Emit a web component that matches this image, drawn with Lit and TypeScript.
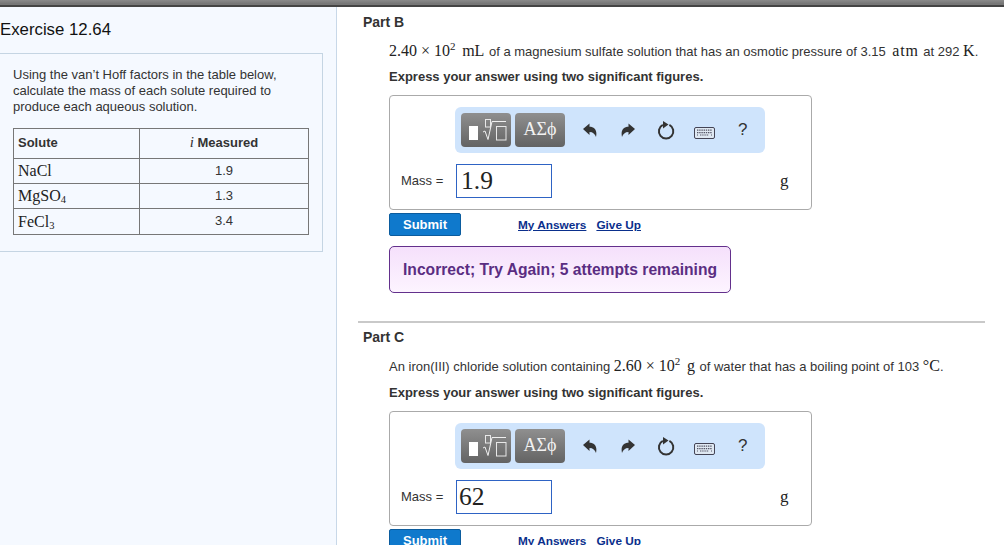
import { LitElement, html, css, svg } from "lit";
import { customElement } from "lit/decorators.js";

const rootIcon = html`<svg class="glyph" width="50" height="34" viewBox="0 0 50 34" aria-hidden="true">
  <rect x="8" y="13" width="9" height="14" fill="#fff"/>
  <rect x="24.5" y="6.5" width="5" height="7.5" fill="none" stroke="#e8e8e8" stroke-width="1"/>
  <path d="M22 19 L24 18 L27 26.5 L31 8.5 L45 8.5" fill="none" stroke="#f0f0f0" stroke-width="1"/>
  <rect x="35.5" y="13.5" width="9.5" height="13.5" fill="none" stroke="#e8e8e8" stroke-width="1"/>
</svg>`;

const arrow = svg`<path d="M0 6 L6.5 0.5 V3.7 C11.5 3.7 14.5 7 13 14 C12 11 10 9 6.5 9 V12 Z" fill="#333"/>`;

function toolbar() {
  return html`<div class="toolbar">
    <div class="tb">${rootIcon}</div>
    <div class="tb greek">ΑΣϕ</div>
    <div class="tools">
      <svg class="t1" width="14" height="15" viewBox="0 0 14 15">${arrow}</svg>
      <svg class="t2" width="14" height="15" viewBox="0 0 14 15"><g transform="translate(14 0) scale(-1 1)">${arrow}</g></svg>
      <svg class="t3" width="18" height="19" viewBox="0 0 18 19">
        <path d="M5.8 3.9 A7.2 7.2 0 1 0 12.4 3.9" fill="none" stroke="#333" stroke-width="2"/>
        <path d="M6 0 L11.5 3.6 L6 7.5 Z" fill="#333"/>
      </svg>
      <svg class="t4" width="21" height="12" viewBox="0 0 21 12">
        <rect x="0.5" y="0.5" width="20" height="11" rx="1.5" fill="#dfe8f2" stroke="#445"/>
        <path d="M3 3.2H18M3 5.6H18M3 8H4M6 8H15M17 8H18" stroke="#556" stroke-width="1.2" stroke-dasharray="1.4 .8"/>
      </svg>
      <span class="q">?</span>
    </div>
  </div>`;
}

function answer(value: string, cls: string) {
  return html`<div class="answer">
    ${toolbar()}
    <div class="row">
      <span class="lbl">Mass =</span>
      <div class="input ${cls}">${value}</div>
      <span class="unit">g</span>
    </div>
  </div>
  <div class="actions">
    <div class="submit">Submit</div>
    <a class="link first">My Answers</a>
    <a class="link">Give Up</a>
  </div>`;
}

@customElement("app-root")
export class AppRoot extends LitElement {
  static styles = css`
    :host {
      display: block;
      width: 1004px;
      height: 545px;
      overflow: hidden;
      background: #fff;
      font-family: "Liberation Sans", Arial, sans-serif;
      color: #333;
    }
    .topbar {
      height: 7px;
      box-sizing: border-box;
      background: linear-gradient(#8a8a8a, #777 70%);
      border-bottom: 2px solid #444;
    }
    .main { display: flex; height: 538px; }
    .left {
      width: 337px;
      flex: none;
      box-sizing: border-box;
      background: #f5f9ff;
      border-right: 1px solid #c8d8e8;
      padding-top: 14px;
    }
    h1 {
      margin: 0;
      font-weight: 400;
      font-size: 16.8px;
      line-height: 18px;
      color: #111;
    }
    .intro {
      margin-top: 14px;
      width: 323px;
      box-sizing: border-box;
      height: 199px;
      border: 1px solid #c5d5e3;
      border-left: none;
      padding: 13px 0 0 13px;
    }
    .intro p {
      margin: 0 0 13px;
      font-size: 13px;
      line-height: 16px;
      width: 290px;
      color: #333;
    }
    table {
      border-collapse: collapse;
      width: 296px;
      table-layout: fixed;
      border: 1px solid #222;
      font-size: 13px;
    }
    td, th {
      border: 1px solid #777;
      padding: 0 0 0 4px;
      height: 24px;
      text-align: left;
      background: #f5f9ff;
    }
    th { height: 27px; padding-bottom: 2px; font-size: 13px; font-weight: 700; color: #333; }
    td.ctr { height: 22px; padding: 0 0 2px; }
    th.ctr { padding: 0 0 2px; }
    tr:last-child td { height: 25px; }
    tr:last-child td.ctr { height: 23px; }
    .c1 { width: 121px; }
    .ctr { text-align: center; }
    .chem { font-family: "Liberation Serif", serif; font-size: 16px; color: #222; }
    sub { font-size: 10.5px; line-height: 0; vertical-align: -2px; }
    .ital { font-family: "Liberation Serif", serif; font-style: italic; font-weight: 400; font-size: 15px; }

    .right { flex: 1; min-width: 0; padding: 8px 19px 0 22px; }
    .part { margin: 0 0 0 4px; font-size: 14px; line-height: 15px; font-weight: 700; color: #333; }
    .body { margin-left: 30px; }
    .stmt {
      margin: 11px 0 0;
      font-size: 13px;
      line-height: 20px;
      white-space: nowrap;
      color: #333;
    }
    .m { font-family: "Liberation Serif", serif; font-size: 16px; color: #222; }
    .m.u { margin: 0 1px 0 3px; }
    .m.wide { letter-spacing: 0.8px; }
    sup { font-size: 11px; line-height: 0; vertical-align: 6px; }
    .express { margin: 6px 0 0; font-size: 13px; line-height: 18px; font-weight: 700; color: #333; }
    .answer {
      margin-top: 9px;
      width: 423px;
      height: 115px;
      box-sizing: border-box;
      border: 1px solid #aaa;
      border-radius: 4px;
      padding: 11px 0 0 65px;
    }
    .toolbar {
      width: 310px;
      height: 46px;
      box-sizing: border-box;
      background: #cfe4fc;
      border-radius: 6px;
      padding: 6px;
      display: flex;
      gap: 4px;
    }
    .tb {
      width: 50px;
      height: 34px;
      border-radius: 4px;
      background: linear-gradient(#8f8f8f, #636363);
      color: #f2f2f2;
    }
    .glyph { display: block; }
    .greek {
      font-family: "Liberation Serif", serif;
      font-size: 18px;
      line-height: 32px;
      text-align: center;
    }
    .tools { display: flex; align-items: center; padding-left: 14px; }
    .t2 { margin-left: 24px; }
    .t3 { margin-left: 22px; }
    .t4 { margin-left: 19px; margin-top: 5px; }
    .q { margin-left: 23px; font-size: 17px; color: #333; }
    .row {
      display: flex;
      align-items: center;
      margin: 11px 0 0 -54px;
      height: 34px;
    }
    .lbl { width: 55px; padding-bottom: 2px; font-size: 13px; color: #333; }
    .input {
      width: 96px;
      height: 34px;
      box-sizing: border-box;
      border: 1px solid #2e63c4;
      background: #fff;
      font-family: "Liberation Serif", serif;
      font-size: 25.5px;
      line-height: 31px;
      color: #222;
    }
    .input.a { padding-left: 4px; }
    .input.b { padding-left: 2px; }
    .unit {
      margin-left: 228px;
      font-family: "Liberation Serif", serif;
      font-size: 17px;
      color: #222;
    }
    .actions { display: flex; align-items: center; margin-top: 3px; height: 23px; }
    .submit {
      width: 72px;
      height: 23px;
      box-sizing: border-box;
      border: 1px solid #0b5c9e;
      border-radius: 2px;
      background: #0f79cc;
      color: #fff;
      font-size: 13px;
      font-weight: 700;
      line-height: 21px;
      text-align: center;
    }
    .link {
      font-size: 11.8px;
      font-weight: 700;
      color: #0a2f8c;
      text-decoration: underline;
      margin-left: 10px;
    }
    .link.first { margin-left: 57px; }
    .feedback {
      margin-top: 10px;
      width: 342px;
      height: 47px;
      box-sizing: border-box;
      border: 1px solid #63308c;
      border-radius: 5px;
      background: linear-gradient(#f5e0fb, #fdf4ff);
      color: #5a2d82;
      font-size: 15.65px;
      font-weight: 700;
      line-height: 45px;
      padding-left: 13px;
      white-space: nowrap;
    }
    hr {
      margin: 28px 0 0 -1px;
      width: 627px;
      height: 2px;
      border: none;
      background: #c9c9c9;
    }
    .part.c { margin-top: 7px; }
    .stmt.c { margin-top: 11px; }
    .stmt.c + .express { margin-top: 7px; }
  `;

  render() {
    return html`
      <div class="topbar"></div>
      <div class="main">
        <div class="left">
          <h1>Exercise 12.64</h1>
          <div class="intro">
            <p>Using the van’t Hoff factors in the table below, calculate the mass of each solute required to produce each aqueous solution.</p>
            <table>
              <tr><th class="c1">Solute</th><th class="ctr"><span class="ital">i</span> Measured</th></tr>
              <tr><td class="chem">NaCl</td><td class="ctr">1.9</td></tr>
              <tr><td class="chem">MgSO<sub>4</sub></td><td class="ctr">1.3</td></tr>
              <tr><td class="chem">FeCl<sub>3</sub></td><td class="ctr">3.4</td></tr>
            </table>
          </div>
        </div>
        <div class="right">
          <h2 class="part">Part B</h2>
          <div class="body">
            <p class="stmt"><span class="m">2.40 × 10<sup>2</sup></span> <span class="m u">mL</span> of a magnesium sulfate solution that has an osmotic pressure of 3.15 <span class="m u wide">atm</span> at 292 <span class="m">K</span>.</p>
            <p class="express">Express your answer using two significant figures.</p>
            ${answer("1.9", "a")}
            <div class="feedback">Incorrect; Try Again; 5 attempts remaining</div>
          </div>
          <hr />
          <h2 class="part c">Part C</h2>
          <div class="body">
            <p class="stmt c">An iron(III) chloride solution containing <span class="m">2.60 × 10<sup>2</sup></span> <span class="m u">g</span> of water that has a boiling point of 103 <span class="m">°C</span>.</p>
            <p class="express">Express your answer using two significant figures.</p>
            ${answer("62", "b")}
          </div>
        </div>
      </div>
    `;
  }
}
